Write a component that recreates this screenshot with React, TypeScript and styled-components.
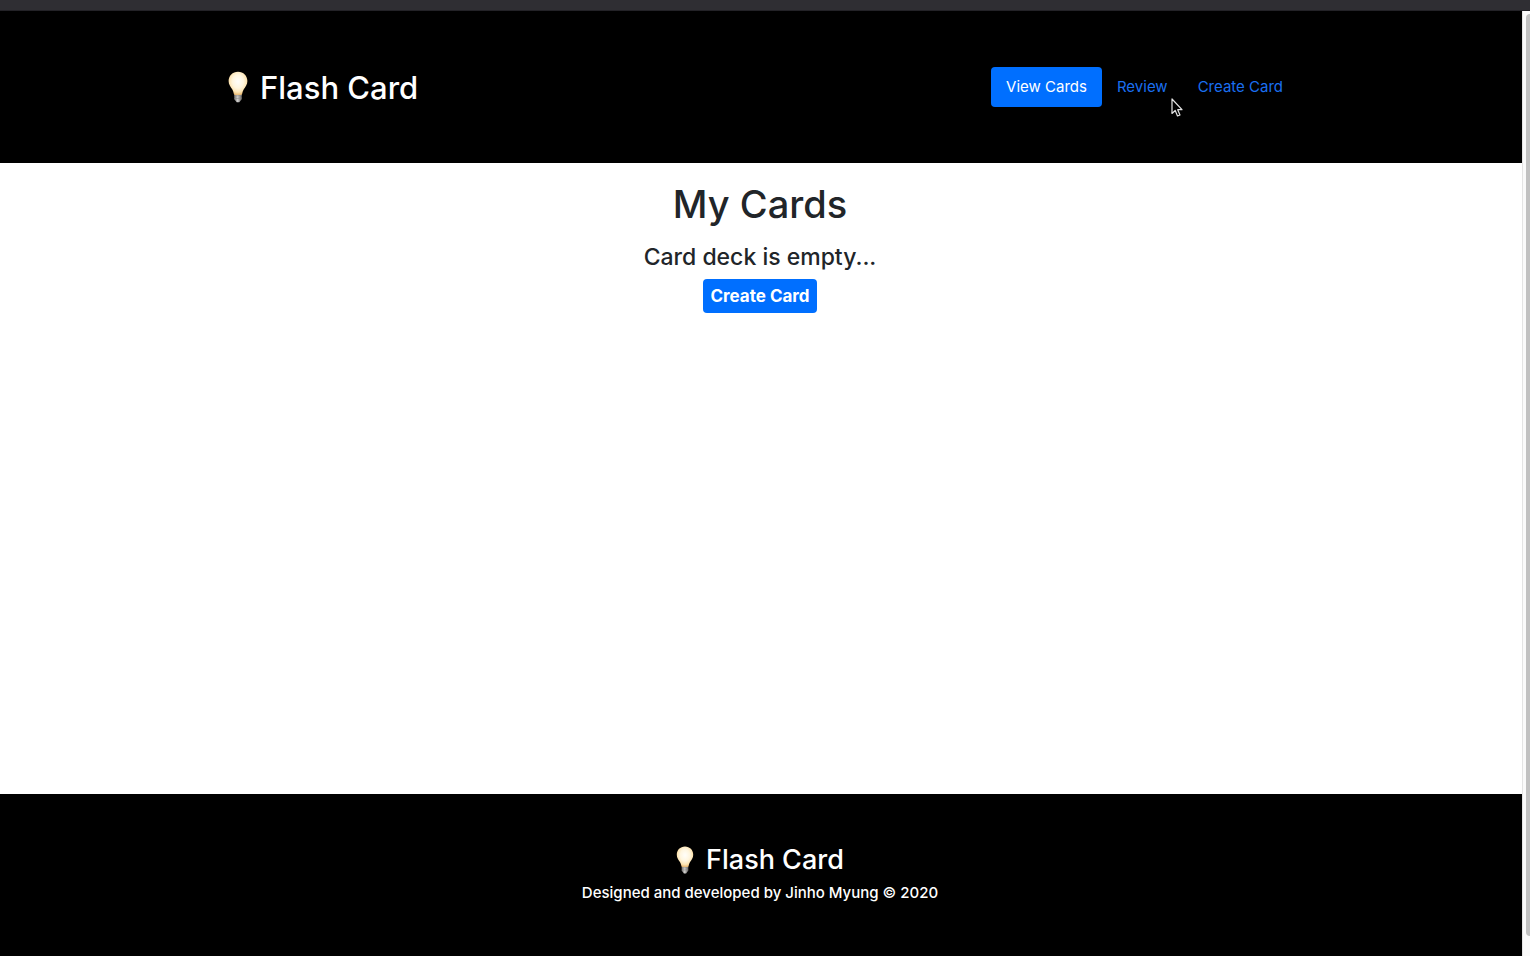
import React from "react";
import styled, { createGlobalStyle } from "styled-components";

const GlobalStyle = createGlobalStyle`
  *, *::before, *::after { box-sizing: border-box; }
  body {
    margin: 0;
    background: #fff;
    color: #212529;
    font-family: Inter, "Liberation Sans", sans-serif;
    font-size: 16px;
    line-height: 24px;
  }
  h1, h2, h3, p { margin: 0; font-weight: 500; }
`;

const Window = styled.div`
  display: flex;
  flex-direction: column;
  min-height: 100vh;
`;

const TopStrip = styled.div`
  height: 11px;
  background: #2f2e33;
  border-bottom: 1px solid #232227;
`;

const Viewport = styled.div`
  display: flex;
  flex: 1;
`;

const Page = styled.div`
  display: flex;
  flex: 1;
  flex-direction: column;
  min-width: 0;
`;

const Header = styled.header`
  padding: 48px 2px 48px 0;
  background: #000;
`;

const NavBar = styled.div`
  display: flex;
  align-items: center;
  justify-content: space-between;
  max-width: 1140px;
  margin: 0 auto;
  padding: 8px 32px 8px 38px;
`;

const Brand = styled.div<{ $size: number; $line: number }>`
  display: flex;
  align-items: center;
  justify-content: center;
  gap: 12px;
  color: #fff;
  font-size: ${(p) => p.$size}px;
  line-height: ${(p) => p.$line}px;
`;

const BrandName = styled.h2`
  padding-top: 1px;
  font-size: inherit;
  line-height: inherit;
`;

const Nav = styled.nav`
  display: flex;
`;

const NavItem = styled.a<{ $active?: boolean }>`
  position: relative;
  padding: 8px 15px;
  border-radius: 4px;
  background: ${(p) => (p.$active ? "#006fff" : "transparent")};
  color: ${(p) => (p.$active ? "#fff" : "#1a6ff0")};
  font-size: 15px;
  text-decoration: none;
`;

const Pointer = styled.svg`
  position: absolute;
  right: 0;
  bottom: -11px;
`;

const Main = styled.main`
  display: flex;
  flex: 1;
  flex-direction: column;
  align-items: center;
  gap: 8px;
  padding: 17px 2px 16px 0;
`;

const Title = styled.h1`
  font-size: 38px;
  line-height: 48px;
`;

const EmptyMessage = styled.h3`
  margin-top: 8px;
  font-size: 23px;
  line-height: 27px;
`;

const CreateButton = styled.button`
  padding: 5px 7px;
  border: 0;
  border-radius: 4px;
  background: #006fff;
  color: #fff;
  font: bold 17px/24px Inter, "Liberation Sans", sans-serif;
`;

const Footer = styled.footer`
  padding: 48px 2px 48px 0;
  background: #000;
  color: #fff;
  text-align: center;
`;

const Credit = styled.p`
  font-size: 15px;
  padding: 4px 0 3px;
`;

const ScrollTrack = styled.div`
  width: 8px;
  padding: 3px 0 20px 3px;
  border-left: 1px solid #e4e4e4;
  background: #fafafa;
  display: flex;
`;

const ScrollThumb = styled.div`
  flex: 1;
  border-radius: 4px 0 0 4px;
  background: #c1c1c1;
`;

function Bulb({ id, width, height }: { id: string; width: number; height: number }) {
  return (
    <svg width={width} height={height} viewBox="0 0 20 32" aria-hidden="true">
      <defs>
        <radialGradient id={id} cx="50%" cy="42%" r="58%">
          <stop offset="0" stopColor="#fffefa" />
          <stop offset="0.5" stopColor="#fff6df" />
          <stop offset="0.8" stopColor="#fce4b3" />
          <stop offset="1" stopColor="#e9b973" />
        </radialGradient>
        <linearGradient id={`${id}-base`}>
          <stop offset="0" stopColor="#716f6d" />
          <stop offset="0.45" stopColor="#d1d0ce" />
          <stop offset="1" stopColor="#62605e" />
        </linearGradient>
      </defs>
      <path d="M6.2 22h7.6v6.2l-1.3 1.6-1.2 1.5H8.7l-1.2-1.5-1.3-1.6z" fill={`url(#${id}-base)`} />
      <path d="M6.4 25.1l7.2-.7M6.4 27.7l7.2-.7" stroke="#8a8885" strokeWidth="0.6" />
      <path
        d="M10 .7C4.5.7.6 4.8.6 10c0 3.6 2 5.9 3.6 8.3 1 1.6 1.2 3.1 1.7 4.6q.3 1 1.3 1h5.6q1 0 1.3-1c.5-1.5.7-3 1.7-4.6 1.6-2.4 3.6-4.7 3.6-8.3C19.4 4.8 15.5.7 10 .7z"
        fill={`url(#${id})`}
      />
    </svg>
  );
}

export default function App() {
  return (
    <Window>
      <GlobalStyle />
      <TopStrip />
      <Viewport>
        <Page>
          <Header>
            <NavBar>
              <Brand $size={31} $line={39}>
                <Bulb id="header-bulb" width={20} height={32} />
                <BrandName>Flash Card</BrandName>
              </Brand>
              <Nav>
                <NavItem href="#cards" $active>View Cards</NavItem>
                <NavItem href="#review">
                  Review
                  <Pointer width="12" height="20" viewBox="0 0 12 20" aria-hidden="true">
                    <path
                      d="M1 1v14.5l3.2-3 2.3 5.5 2.5-1-2.3-5.3H11z"
                      fill="#000"
                      stroke="#e4e4e4"
                      strokeWidth="1.2"
                      strokeLinejoin="round"
                    />
                  </Pointer>
                </NavItem>
                <NavItem href="#create">Create Card</NavItem>
              </Nav>
            </NavBar>
          </Header>
          <Main>
            <Title>My Cards</Title>
            <EmptyMessage>Card deck is empty...</EmptyMessage>
            <CreateButton type="button">Create Card</CreateButton>
          </Main>
          <Footer>
            <Brand $size={27} $line={34}>
              <Bulb id="footer-bulb" width={18} height={28} />
              <BrandName>Flash Card</BrandName>
            </Brand>
            <Credit>Designed and developed by Jinho Myung © 2020</Credit>
          </Footer>
        </Page>
        <ScrollTrack>
          <ScrollThumb />
        </ScrollTrack>
      </Viewport>
    </Window>
  );
}
